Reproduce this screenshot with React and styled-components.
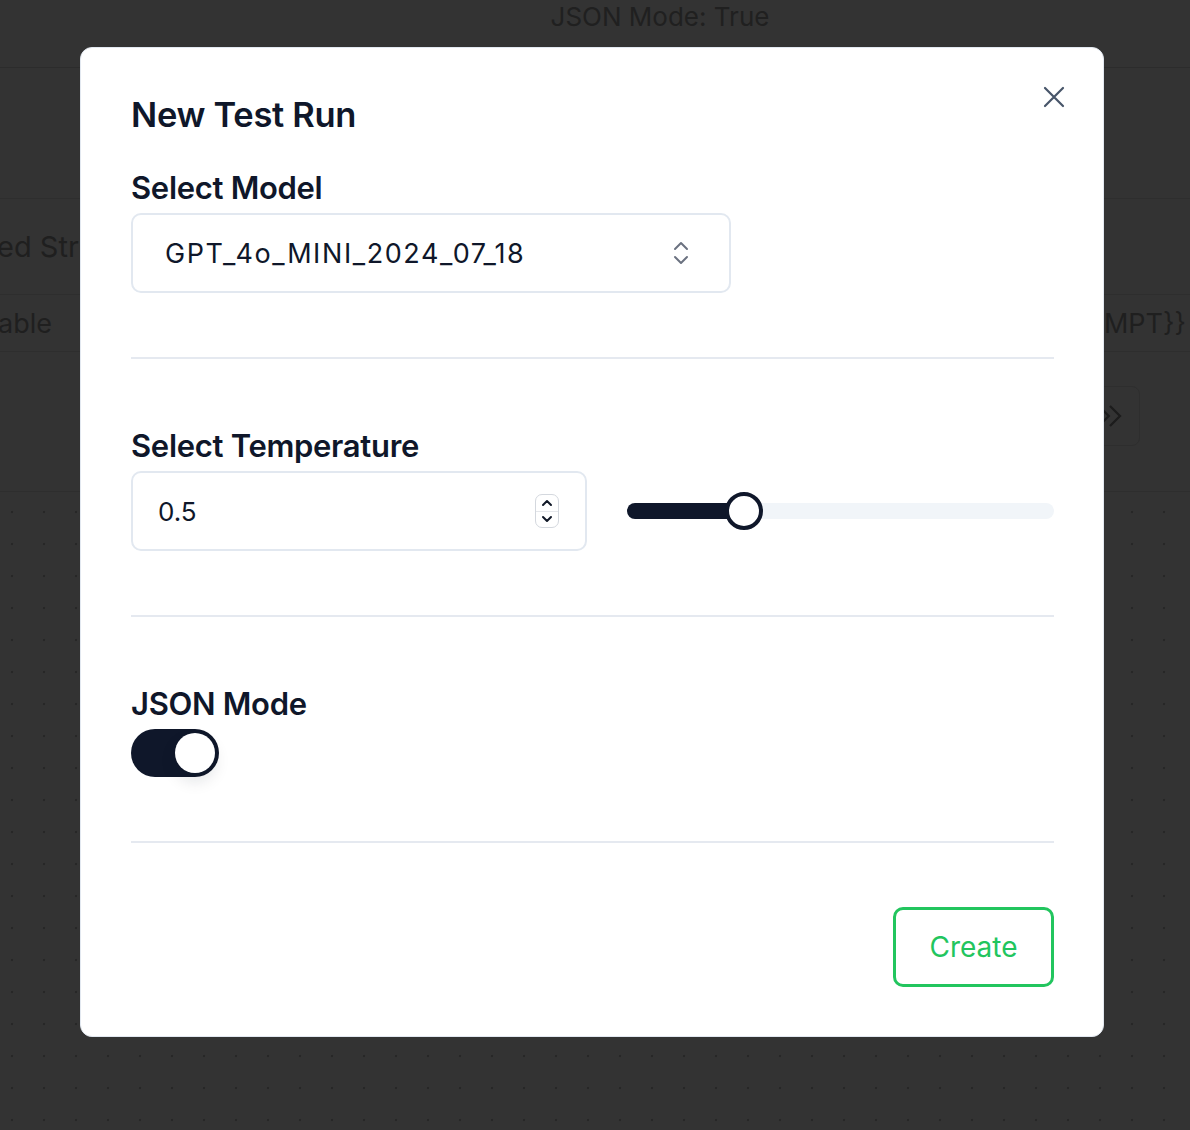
import React, { useState } from 'react'
import styled, { createGlobalStyle } from 'styled-components'

const GlobalStyle = createGlobalStyle`
  html, body {
    margin: 0;
    padding: 0;
    background: #333333;
  }
  body {
    font-family: Inter, "Noto Sans", "Liberation Sans", sans-serif;
    color: #0f172a;
  }
  * { box-sizing: border-box; }
`

/* ---------- page behind the dialog (dimmed) ---------- */

const Page = styled.div`
  position: relative;
  width: 1190px;
  height: 1130px;
  overflow: hidden;
  background: #333333;
  color: #1e1e1e;
`

const TopBar = styled.header`
  height: 68px;
  border-bottom: 1px solid #2c2c2c;
  display: flex;
  justify-content: center;
  padding: 1px 0 0 130px;
  font-size: 26px;
  color: #202020;
`

const Spacer = styled.div`
  height: ${p => p.h}px;
  border-bottom: 1px solid #2e2e2e;
`

const BgRow = styled.div`
  height: ${p => p.h}px;
  display: flex;
  align-items: center;
  justify-content: space-between;
  border-bottom: 1px solid #2e2e2e;
  font-size: ${p => p.size || 27}px;
  color: #1f1f1f;
`

const Cut = styled.span`
  margin: 0 ${p => p.right || 0}px 0 ${p => p.left || 0}px;
  white-space: nowrap;
`

const ToolRow = styled.div`
  height: 140px;
  display: flex;
  justify-content: flex-end;
  padding: 34px 50px 0 0;
  border-bottom: 1px solid #2e2e2e;
`

const GhostButton = styled.div`
  width: 60px;
  height: 60px;
  border: 1px solid #2e2e2e;
  border-radius: 8px;
  display: flex;
  align-items: center;
  justify-content: center;
  color: #1c1c1c;
`

const Dots = styled.div`
  height: 700px;
  background-image: radial-gradient(circle, #272727 1.3px, transparent 1.6px);
  background-size: 32px 32px;
  background-position: -4px 4px;
`

/* ---------- dialog ---------- */

const Dialog = styled.div`
  position: absolute;
  left: 80px;
  top: 47px;
  width: 1024px;
  height: 990px;
  background: #ffffff;
  border: 1px solid #e2e8f0;
  border-radius: 12px;
  padding: 46px 49px 49px 50px;
  display: flex;
  flex-direction: column;
`

const Close = styled.button`
  position: absolute;
  top: 37px;
  right: 37px;
  width: 24px;
  height: 24px;
  padding: 0;
  border: 0;
  background: none;
  color: #475569;
  display: flex;
  cursor: pointer;
`

const Title = styled.h2`
  margin: 0 0 36px;
  font-size: 34.5px;
  line-height: 42px;
  font-weight: 600;
  letter-spacing: -0.3px;
  color: #0f172a;
`

const Section = styled.section`
  padding: ${p => (p.first ? 0 : 71)}px 0 64px;
  border-bottom: 2px solid #e5e9f0;
`

const Label = styled.div`
  font-size: 31px;
  line-height: 32px;
  font-weight: 600;
  letter-spacing: -0.3px;
  margin-bottom: 9px;
  color: #0f172a;
`

const Field = styled.div`
  width: ${p => p.w}px;
  height: 80px;
  border: 2px solid #e2e8f0;
  border-radius: 10px;
  display: flex;
  align-items: center;
  justify-content: space-between;
  padding: ${p => p.pad};
  font-size: 26px;
  color: #0f172a;
`

const ModelName = styled.span`
  font-size: 27px;
  letter-spacing: 1.6px;
`

const Row = styled.div`
  display: flex;
  align-items: center;
  gap: 40px;
`

const Spinner = styled.div`
  width: 24px;
  height: 34px;
  border: 1px solid #d4d8de;
  border-radius: 7px;
  display: flex;
  flex-direction: column;
  overflow: hidden;
  color: #111827;
`

const SpinHalf = styled.div`
  flex: 1;
  display: flex;
  align-items: center;
  justify-content: center;
  & + & { border-top: 1px solid #e5e7eb; }
`

const Slider = styled.div`
  position: relative;
  flex: 1;
  height: 16px;
  border-radius: 8px;
  background: #f1f5f9;
`

const SliderFill = styled.div`
  height: 100%;
  border-radius: 8px;
  background: #0f172a;
`

const Thumb = styled.div`
  position: absolute;
  top: 50%;
  width: 38px;
  height: 38px;
  margin: -19px 0 0 -19px;
  border-radius: 50%;
  border: 4px solid #0f172a;
  background: #ffffff;
`

const Switch = styled.button`
  width: 88px;
  height: 48px;
  padding: 4px;
  border: 0;
  border-radius: 24px;
  background: ${p => (p.on ? '#0f172a' : '#e2e8f0')};
  display: flex;
  justify-content: ${p => (p.on ? 'flex-end' : 'flex-start')};
  cursor: pointer;
`

const Knob = styled.span`
  width: 40px;
  height: 40px;
  border-radius: 50%;
  background: #ffffff;
  box-shadow: 0 8px 16px rgba(15, 23, 42, 0.12);
`

const Footer = styled.div`
  margin-top: auto;
  display: flex;
  justify-content: flex-end;
`

const CreateButton = styled.button`
  width: 161px;
  height: 80px;
  border: 3px solid #22c55e;
  border-radius: 10px;
  background: #ffffff;
  color: #22c55e;
  font-family: inherit;
  font-size: 28px;
  font-weight: 400;
  cursor: pointer;
`

const ChevronsUpDown = () => (
  <svg width="24" height="26" viewBox="0 0 24 26" fill="none" stroke="#6b7280" strokeWidth="2" strokeLinecap="round" strokeLinejoin="round">
    <path d="M6 9l6-6 6 6" />
    <path d="M6 17l6 6 6-6" />
  </svg>
)

const CloseIcon = () => (
  <svg width="24" height="24" viewBox="0 0 24 24" fill="none" stroke="currentColor" strokeWidth="2.2" strokeLinecap="round">
    <path d="M3 3l18 18M21 3L3 21" />
  </svg>
)

const Caret = ({ up }) => (
  <svg width="12" height="8" viewBox="0 0 12 8" fill="none" stroke="currentColor" strokeWidth="2" strokeLinecap="round" strokeLinejoin="round">
    <path d={up ? 'M2 6l4-4 4 4' : 'M2 2l4 4 4-4'} />
  </svg>
)

const DoubleChevron = () => (
  <svg width="30" height="30" viewBox="0 0 24 24" fill="none" stroke="currentColor" strokeWidth="1.8">
    <path d="M3 4l8 8-8 8M12 4l8 8-8 8" />
  </svg>
)

export default function App() {
  const [temp] = useState(0.5)
  const [json, setJson] = useState(true)
  const pct = 27.5

  return (
    <>
      <GlobalStyle />
      <Page>
        <TopBar>JSON Mode: {json ? 'True' : 'False'}</TopBar>
        <Spacer h={131} />
        <BgRow h={96} size={29}>
          <Cut left={-3}>ed Str</Cut>
        </BgRow>
        <BgRow h={57}>
          <Cut left={-2}>able</Cut>
          <Cut right={4}>{'{{PROMPT}}'}</Cut>
        </BgRow>
        <ToolRow>
          <GhostButton><DoubleChevron /></GhostButton>
        </ToolRow>
        <Dots />

        <Dialog>
          <Close aria-label="Close"><CloseIcon /></Close>
          <Title>New Test Run</Title>

          <Section first>
            <Label>Select Model</Label>
            <Field w={600} pad="0 36px 0 32px">
              <ModelName>GPT_4o_MINI_2024_07_18</ModelName>
              <ChevronsUpDown />
            </Field>
          </Section>

          <Section>
            <Label>Select Temperature</Label>
            <Row>
              <Field w={456} pad="0 26px 0 25px">
                <span>{temp}</span>
                <Spinner>
                  <SpinHalf><Caret up /></SpinHalf>
                  <SpinHalf><Caret /></SpinHalf>
                </Spinner>
              </Field>
              <Slider>
                <SliderFill style={{ width: `${pct}%` }} />
                <Thumb style={{ left: `${pct}%` }} />
              </Slider>
            </Row>
          </Section>

          <Section>
            <Label>JSON Mode</Label>
            <Switch on={json} onClick={() => setJson(!json)}>
              <Knob />
            </Switch>
          </Section>

          <Footer>
            <CreateButton>Create</CreateButton>
          </Footer>
        </Dialog>
      </Page>
    </>
  )
}
